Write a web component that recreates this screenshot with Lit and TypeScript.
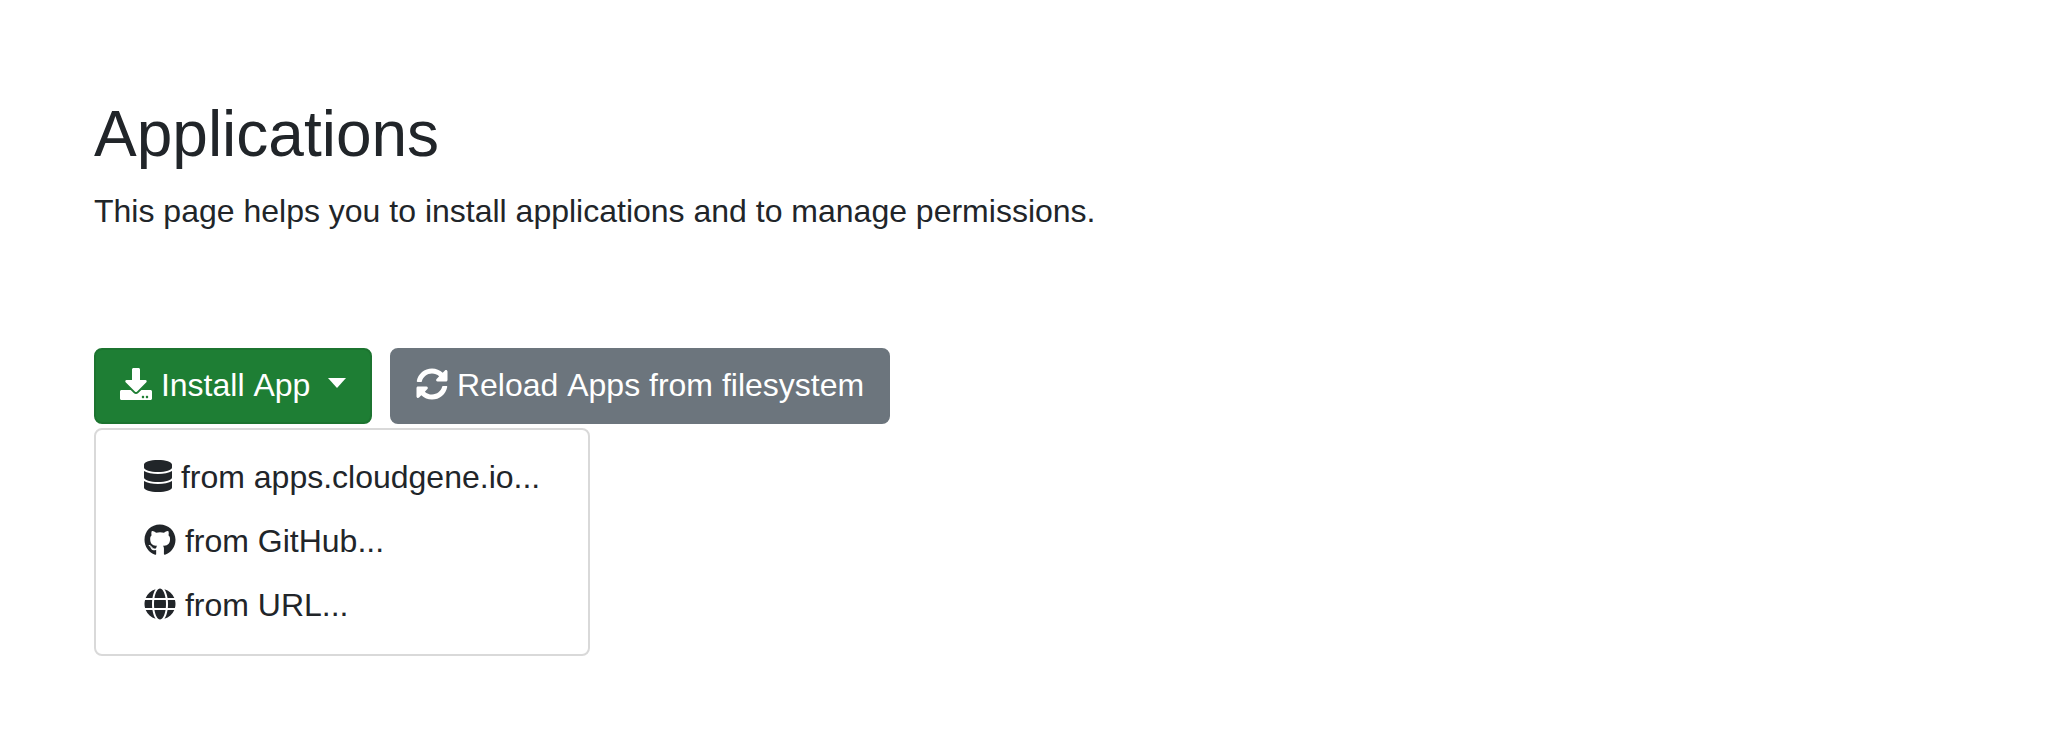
import { LitElement, html, css } from "lit";
import { customElement } from "lit/decorators.js";

interface Glyph {
  width: number;
  path: string;
}

const icons: Record<string, Glyph> = {
  download: {
    width: 512,
    path: "M216 0h80c13.3 0 24 10.7 24 24v168h87.7c17.8 0 26.7 21.5 14.1 34.1L269.7 378.3c-7.5 7.5-19.8 7.5-27.3 0L90.1 226.1c-12.6-12.6-3.7-34.1 14.1-34.1H192V24c0-13.3 10.7-24 24-24zm296 376v112c0 13.3-10.7 24-24 24H24c-13.3 0-24-10.7-24-24V376c0-13.3 10.7-24 24-24h146.7l49 49c20.1 20.1 52.5 20.1 72.6 0l49-49H488c13.3 0 24 10.7 24 24zm-124 88c0-11-9-20-20-20s-20 9-20 20 9 20 20 20 20-9 20-20zm64 0c0-11-9-20-20-20s-20 9-20 20 9 20 20 20 20-9 20-20z",
  },
  sync: {
    width: 512,
    path: "M370.72 133.28C339.458 104.008 298.888 87.962 255.848 88c-77.458.068-144.328 53.178-162.791 126.85-1.344 5.363-6.122 9.15-11.651 9.15H24.103c-7.498 0-13.194-6.807-11.807-14.176C33.933 94.924 134.813 8 256 8c66.448 0 126.791 26.136 171.315 68.685L463.03 40.97C478.149 25.851 504 36.559 504 57.941V192c0 13.255-10.745 24-24 24H345.941c-21.382 0-32.09-25.851-16.971-40.971l41.75-41.749zM32 296h134.059c21.382 0 32.09 25.851 16.971 40.971l-41.75 41.75c31.262 29.273 71.835 45.319 114.876 45.28 77.418-.07 144.315-53.144 162.787-126.849 1.344-5.363 6.122-9.15 11.651-9.15h57.304c7.498 0 13.194 6.807 11.807 14.176C478.067 417.076 377.187 504 256 504c-66.448 0-126.791-26.136-171.315-68.685L48.97 471.03C33.851 486.149 8 475.441 8 454.059V320c0-13.255 10.745-24 24-24z",
  },
  database: {
    width: 448,
    path: "M448 73.143v45.714C448 159.143 347.667 192 224 192S0 159.143 0 118.857V73.143C0 32.857 100.333 0 224 0s224 32.857 224 73.143zM448 176v102.857C448 319.143 347.667 352 224 352S0 319.143 0 278.857V176c48.125 33.143 136.208 48.572 224 48.572S399.874 209.143 448 176zm0 160v102.857C448 479.143 347.667 512 224 512S0 479.143 0 438.857V336c48.125 33.143 136.208 48.572 224 48.572S399.874 369.143 448 336z",
  },
  github: {
    width: 496,
    path: "M165.9 397.4c0 2-2.3 3.6-5.2 3.6-3.3.3-5.6-1.3-5.6-3.6 0-2 2.3-3.6 5.2-3.6 3-.3 5.6 1.3 5.6 3.6zm-31.1-4.5c-.7 2 1.3 4.3 4.3 4.9 2.6 1 5.6 0 6.2-2s-1.3-4.3-4.3-5.2c-2.6-.7-5.5.3-6.2 2.3zm44.2-1.7c-2.9.7-4.9 2.6-4.6 4.9.3 2 2.9 3.3 5.9 2.6 2.9-.7 4.9-2.6 4.6-4.6-.3-1.9-3-3.2-5.9-2.9zM244.8 8C106.1 8 0 113.3 0 252c0 110.9 69.8 205.8 169.5 239.2 12.8 2.3 17.3-5.6 17.3-12.1 0-6.2-.3-40.4-.3-61.4 0 0-70 15-84.7-29.8 0 0-11.4-29.1-27.8-36.6 0 0-22.9-15.7 1.6-15.4 0 0 24.9 2 38.6 25.8 21.9 38.6 58.6 27.5 72.9 20.9 2.3-16 8.8-27.1 16-33.7-55.9-6.2-112.3-14.3-112.3-110.5 0-27.5 7.6-41.3 23.6-58.9-2.6-6.5-11.1-33.3 2.6-67.9 20.9-6.5 69 27 69 27 20-5.6 41.5-8.5 62.8-8.5s42.8 2.9 62.8 8.5c0 0 48.1-33.6 69-27 13.7 34.7 5.2 61.4 2.6 67.9 16 17.7 25.8 31.5 25.8 58.9 0 96.5-58.9 104.2-114.8 110.5 9.2 7.9 17 22.9 17 46.4 0 33.7-.3 75.4-.3 83.6 0 6.5 4.6 14.4 17.3 12.1C428.2 457.8 496 362.9 496 252 496 113.3 383.5 8 244.8 8zM97.2 352.9c-1.3 1-1 3.3.7 5.2 1.6 1.6 3.9 2.3 5.2 1 1.3-1 1-3.3-.7-5.2-1.6-1.6-3.9-2.3-5.2-1zm-10.8-8.1c-.7 1.3.3 2.9 2.3 3.9 1.6 1 3.6.7 4.3-.7.7-1.3-.3-2.9-2.3-3.9-2-.6-3.6-.3-4.3.7zm32.4 35.6c-1.6 1.3-1 4.3 1.3 6.2 2.3 2.3 5.2 2.6 6.5 1 1.3-1.3.7-4.3-1.3-6.2-2.2-2.3-5.2-2.6-6.5-1zm-11.4-14.7c-1.6 1-1.6 3.6 0 5.9 1.6 2.3 4.3 3.3 5.6 2.3 1.6-1.3 1.6-3.9 0-6.2-1.4-2.3-4-3.3-5.6-2z",
  },
  globe: {
    width: 496,
    path: "M336.5 160C322 70.7 287.8 8 248 8s-74 62.7-88.5 152h177zM152 256c0 22.2 1.2 43.5 3.3 64h185.3c2.1-20.5 3.3-41.8 3.3-64s-1.2-43.5-3.3-64H155.3c-2.1 20.5-3.3 41.8-3.3 64zm324.7-96c-28.6-67.9-86.5-120.4-158-141.6 24.4 33.8 41.2 84.7 50 141.6h108zM177.2 18.4C105.8 39.6 47.8 92.1 19.3 160h108c8.7-56.9 25.5-107.8 49.9-141.6zM487.4 192H372.7c2.1 21 3.3 42.5 3.3 64s-1.2 43-3.3 64h114.6c5.5-20.5 8.6-41.8 8.6-64s-3.1-43.5-8.5-64zM120 256c0-21.5 1.2-43 3.3-64H8.6C3.2 212.5 0 233.8 0 256s3.2 43.5 8.6 64h114.6c-2-21-3.2-42.5-3.2-64zm39.5 96c14.5 89.3 48.7 152 88.5 152s74-62.7 88.5-152h-177zm159.3 141.6c71.4-21.2 129.4-73.7 158-141.6h-108c-8.8 56.9-25.6 107.8-50 141.6zM19.3 352c28.6 67.9 86.5 120.4 158 141.6-24.4-33.8-41.2-84.7-50-141.6h-108z",
  },
};

const icon = (name: string) => {
  const g = icons[name];
  return html`<svg class="icon ${name}" viewBox="0 0 ${g.width} 512" aria-hidden="true"><path fill="currentColor" d=${g.path}></path></svg>`;
};

const sources = [
  { icon: "database", label: "from apps.cloudgene.io..." },
  { icon: "github", label: "from GitHub..." },
  { icon: "globe", label: "from URL..." },
];

@customElement("app-root")
export class AppRoot extends LitElement {
  static styles = css`
    :host {
      display: block;
      box-sizing: border-box;
      min-height: 744px;
      padding: 96px 94px 0;
      background: #fff;
      color: #212529;
      font: 32px/48px "Liberation Sans", Arial, sans-serif;
    }
    .title {
      margin: 0 0 15px;
      font-size: 64px;
      font-weight: 400;
      line-height: 76px;
    }
    .lead {
      margin: 0;
    }
    .toolbar {
      display: flex;
      gap: 18px;
      margin-top: 113px;
    }
    .dropdown {
      position: relative;
    }
    .btn {
      display: block;
      box-sizing: border-box;
      height: 76px;
      margin: 0;
      padding: 11px 24px 13px;
      border: 2px solid;
      border-radius: 8px;
      color: #fff;
      font: inherit;
      white-space: pre;
    }
    .word {
      display: inline-block;
    }
    .install {
      background: #1e7e34;
      border-color: #1c7430;
    }
    .reload {
      background: #6c757d;
      border-color: #6c757d;
    }
    .caret {
      display: inline-block;
      margin-left: 8.8px;
      vertical-align: 8px;
      border-top: 10px solid;
      border-right: 9px solid transparent;
      border-left: 9px solid transparent;
    }
    .menu {
      position: absolute;
      top: 100%;
      left: 0;
      box-sizing: border-box;
      margin: 4px 0 0;
      padding: 16px 0;
      border: 2px solid #d9d9d9;
      border-radius: 8px;
      background: #fff;
      list-style: none;
    }
    .item {
      padding: 7px 48px 9px;
      white-space: pre;
    }
    .icon {
      display: inline-block;
      width: 32px;
      height: 32px;
      vertical-align: -4px;
    }
    .database {
      width: 28px;
    }
  `;

  render() {
    return html`
      <h2 class="title">Applications</h2>
      <p class="lead">This page helps you to install applications and to manage permissions.</p>
      <div class="toolbar">
        <div class="dropdown">
          <button class="btn install">${icon("download")} Install <span class="word">App</span> <span class="caret"></span></button>
          <ul class="menu">
            ${sources.map((s) => html`<li class="item">${icon(s.icon)} ${s.label}</li>`)}
          </ul>
        </div>
        <button class="btn reload">${icon("sync")} Reload <span class="word">Apps</span> from filesystem</button>
      </div>
    `;
  }
}
